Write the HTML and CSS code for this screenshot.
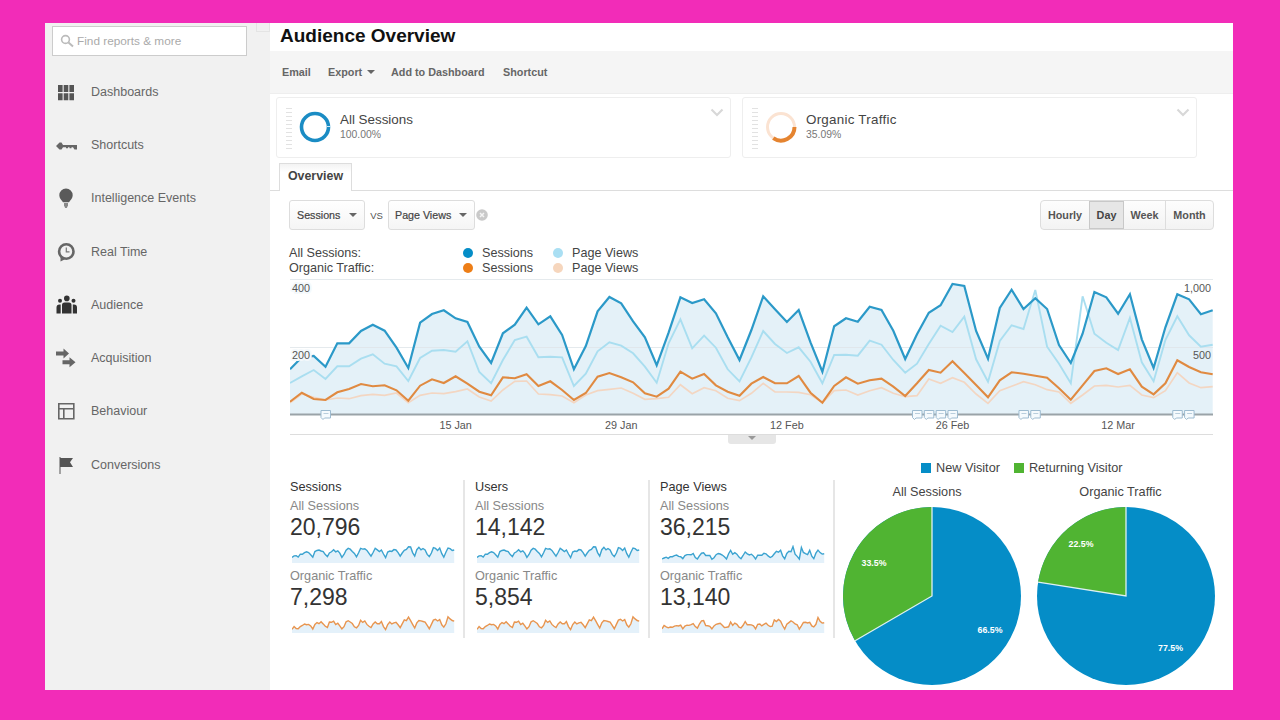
FILE: index.html
```
<!DOCTYPE html>
<html lang="en">
<head>
    <meta charset="UTF-8">
    <meta name="viewport" content="width=device-width, initial-scale=1.0">
    <title>Audience Overview</title>
    <link rel="stylesheet" href="styles.css">
</head>
<body>
    <div class="frame">
        <aside class="sidebar">
            <div class="search">
                <svg width="14" height="14" viewBox="0 0 14 14" fill="none" stroke="#bbb" stroke-width="1.6"><circle cx="5.5" cy="5.5" r="3.9"/><path d="M8.5 8.5L13 12.5" stroke-width="2"/></svg>
                <span>Find reports &amp; more</span>
            </div>
            <div class="collapse"></div>
            <ul class="nav">
                <li>
                    <svg width="22" height="22" viewBox="0 0 22 22"><path fill="#555" d="M3 4h4.600v7H3zM8.700 4h4.600v7H8.700zM14.400 4H19v7h-4.600zM3 12.200h4.600v7H3zM8.700 12.200h4.600v7H8.700zM14.400 12.200H19v7h-4.600z"/></svg>
                    <span>Dashboards</span>
                </li>
                <li>
                    <svg width="22" height="22" viewBox="0 0 22 22"><path fill="#666" d="M1 12l3.500-3.500h2L8 11h14v4.500h-2.500L18 13.300h-1.500v1h-2v-1h-1.500v1h-2v-1H8l-1.500 2.200h-2z"/></svg>
                    <span>Shortcuts</span>
                </li>
                <li>
                    <svg width="22" height="22" viewBox="0 0 22 22"><path fill="#5a5a5a" d="M11 1.500a6.700 6.700 0 0 1 6.700 6.700c0 3-2 4.500-3.700 7H8C6.300 12.700 4.300 11.200 4.300 8.200A6.700 6.700 0 0 1 11 1.500z"/><path fill="#888" d="M9 16h4v2.500l-1.200 2.500h-1.600L9 18.500z"/></svg>
                    <span>Intelligence Events</span>
                </li>
                <li>
                    <svg width="22" height="22" viewBox="0 0 22 22"><circle cx="11.300" cy="10.500" r="7.200" fill="none" stroke="#666" stroke-width="2.600"/><path d="M5.500 15v5.500l5-2.500z" fill="#666"/><path d="M11.300 6.500v4.300h3.200" fill="none" stroke="#777" stroke-width="1.200"/></svg>
                    <span>Real Time</span>
                </li>
                <li class="active">
                    <svg width="22" height="22" viewBox="0 0 22 22" fill="#333"><circle cx="11.800" cy="4.400" r="2.800"/><circle cx="5" cy="6.800" r="2"/><circle cx="18.500" cy="6.800" r="2"/><path d="M7 19.500V11q0-2.500 2.500-2.500H14q2.500 0 2.500 2.500v8.500zM1.500 19.500v-6q0-3 3-3H5.700v9zM22 19.500v-6q0-3-3-3h-1.200v9z"/></svg>
                    <span>Audience</span>
                </li>
                <li>
                    <svg width="22" height="22" viewBox="0 0 22 22" fill="#666"><path d="M1 4.500h7.500V1.500L14 6.500 8.500 11.500V8.500H1zM7.500 13.300h7v-3l6 5-6 5v-3h-7z"/></svg>
                    <span>Acquisition</span>
                </li>
                <li>
                    <svg width="22" height="22" viewBox="0 0 22 22" fill="none" stroke="#666" stroke-width="1.600"><path d="M3.800 3.800h15v15h-15zM3.800 8.800h15M8.800 8.800v10"/></svg>
                    <span>Behaviour</span>
                </li>
                <li>
                    <svg width="22" height="22" viewBox="0 0 22 22" fill="#555"><path d="M4.500 3h1v17h-1zM5.500 4h12.500l-3 4.300 3 4.700H5.500z"/></svg>
                    <span>Conversions</span>
                </li>
            </ul>
        </aside>

        <main class="main">
            <h1>Audience Overview</h1>
            <div class="toolbar">
                <span class="tool-email">Email</span>
                <span class="tool-export">Export <i class="caret"></i></span>
                <span class="tool-add">Add to Dashboard</span>
                <span class="tool-shortcut">Shortcut</span>
            </div>

            <div class="segments">
                <div class="segment">
                    <div class="grip"></div>
                    <svg class="ring" width="32" height="32" viewBox="0 0 32 32" fill="none"><circle cx="16" cy="16" r="13.500" stroke="#1a8cc4" stroke-width="3.600"/><path d="M28 15.500h4" stroke="#cde8f5"/></svg>
                    <div class="segment-text">
                        <div class="segment-name">All Sessions</div>
                        <div class="segment-pct">100.00%</div>
                    </div>
                    <svg class="chevron" width="14" height="9" viewBox="0 0 14 9" fill="none" stroke="#d8d8d8" stroke-width="2.200"><path d="M1.500 1.500L7 7l5.500-5.500"/></svg>
                </div>
                <div class="segment">
                    <div class="grip"></div>
                    <svg class="ring" width="32" height="32" viewBox="0 0 32 32" fill="none"><circle cx="16" cy="16" r="13.500" stroke="#fbe3d2" stroke-width="3"/><path d="M29.500 16A13.500 13.500 0 0 1 8.300 27.100" stroke="#e58430" stroke-width="4"/></svg>
                    <div class="segment-text">
                        <div class="segment-name wide">Organic Traffic</div>
                        <div class="segment-pct">35.09%</div>
                    </div>
                    <svg class="chevron" width="14" height="9" viewBox="0 0 14 9" fill="none" stroke="#d8d8d8" stroke-width="2.200"><path d="M1.500 1.500L7 7l5.500-5.500"/></svg>
                </div>
            </div>

            <div class="tabs"><div class="tab">Overview</div></div>

            <div class="controls">
                <div class="select">Sessions <i class="caret"></i></div>
                <span class="vs">VS</span>
                <div class="select select-wide">Page Views <i class="caret"></i></div>
                <svg class="clear" width="12" height="12" viewBox="0 0 12 12"><circle cx="6" cy="6" r="5.800" fill="#c9c9c9"/><path d="M4 4l4 4M8 4l-4 4" stroke="#f4f4f4" stroke-width="1.500"/></svg>
                <div class="range">
                    <span>Hourly</span><span class="on">Day</span><span>Week</span><span>Month</span>
                </div>
            </div>

            <div class="legend">
                <span>All Sessions:</span><i class="dot blue"></i><span>Sessions</span><i class="dot light-blue"></i><span>Page Views</span>
                <span>Organic Traffic:</span><i class="dot orange"></i><span>Sessions</span><i class="dot light-orange"></i><span>Page Views</span>
            </div>

            <svg id="chart" class="chart" width="924" height="155" viewBox="0 0 924 155"></svg>
            <div class="drawer"><div class="handle"><i class="caret"></i></div></div>

            <div class="bottom">
                <div class="stats">
                    <div class="stat">
                        <h2>Sessions</h2>
                        <p>All Sessions</p>
                        <strong>20,796</strong>
                        <svg class="spark" data-series="sessions" width="165" height="20"></svg>
                        <p>Organic Traffic</p>
                        <strong>7,298</strong>
                        <svg class="spark" data-series="organicSessions" width="165" height="20"></svg>
                    </div>
                    <div class="stat">
                        <h2>Users</h2>
                        <p>All Sessions</p>
                        <strong>14,142</strong>
                        <svg class="spark" data-series="sessions" width="165" height="20"></svg>
                        <p>Organic Traffic</p>
                        <strong>5,854</strong>
                        <svg class="spark" data-series="organicSessions" width="165" height="20"></svg>
                    </div>
                    <div class="stat">
                        <h2>Page Views</h2>
                        <p>All Sessions</p>
                        <strong>36,215</strong>
                        <svg class="spark" data-series="views" width="165" height="20"></svg>
                        <p>Organic Traffic</p>
                        <strong>13,140</strong>
                        <svg class="spark" data-series="organicViews" width="165" height="20"></svg>
                    </div>
                </div>

                <div class="visitors">
                    <div class="visitors-legend">
                        <i class="square new"></i><span>New Visitor</span><i class="square returning"></i><span>Returning Visitor</span>
                    </div>
                    <div class="pies">
                        <div class="pie">
                            <h3>All Sessions</h3>
                            <svg width="180" height="180" viewBox="-90 -90 180 180">
                                <circle r="89" fill="#058dc7"/>
                                <path d="M0 0L-76.900 44.800A89 89 0 0 1 0-89z" fill="#50b432"/>
                                <path d="M0-89V0L-76.900 44.800" fill="none" stroke="#dff0f2" stroke-width="1.300"/>
                                <text x="-58" y="-30">33.5%</text>
                                <text x="58" y="37">66.5%</text>
                            </svg>
                        </div>
                        <div class="pie">
                            <h3>Organic Traffic</h3>
                            <svg width="180" height="180" viewBox="-90 -90 180 180">
                                <circle r="89" fill="#058dc7"/>
                                <path d="M0 0L-87.900-13.900A89 89 0 0 1 0-89z" fill="#50b432"/>
                                <path d="M0-89V0L-87.900-13.900" fill="none" stroke="#dff0f2" stroke-width="1.300"/>
                                <text x="-45" y="-49">22.5%</text>
                                <text x="44.500" y="55">77.5%</text>
                            </svg>
                        </div>
                    </div>
                </div>
            </div>
        </main>
    </div>
    <script src="script.js"></script>
</body>
</html>
```
FILE: styles.css
```
* { box-sizing: border-box; }
body { margin: 0; height: 720px; padding: 23px 47px 30px 45px; background: #f22cb8; font-family: "Liberation Sans", Arial, sans-serif; color: #444; overflow: hidden; }
h1, h2, h3, p, ul { margin: 0; padding: 0; font-weight: normal; }
svg { display: block; flex: none; }

.frame { display: flex; width: 1188px; height: 667px; background: #fff; }

/* sidebar */
.sidebar { position: relative; width: 225px; background: #f1f1f1; }
.search { display: flex; align-items: center; gap: 3px; width: 195px; height: 30px; margin: 3px 0 0 7px; padding-left: 7px; background: #fff; border: 1px solid #ccc; font-size: 11.8px; color: #aaa; }
.collapse { position: absolute; right: 0; top: 0; width: 14px; height: 9px; border: 1px solid #e4e4e4; border-top: none; }
.nav { list-style: none; margin-top: 9px; }
.nav li { display: flex; align-items: center; gap: 14px; height: 53.3px; padding-left: 10px; font-size: 12.5px; color: #666; }

/* header */
.main { width: 963px; }
h1 { height: 28px; padding-left: 10px; font-size: 19px; font-weight: bold; line-height: 26px; color: #111; }
.toolbar { display: flex; align-items: center; height: 43px; padding-left: 12px; background: #f5f5f5; border-bottom: 1px solid #eee; font-size: 10.8px; font-weight: bold; color: #666; }
.tool-email { width: 46px; }
.tool-export { width: 63px; }
.tool-add { width: 112px; }
.caret { display: inline-block; border: 4px solid transparent; border-top-color: #666; border-bottom: none; vertical-align: 2px; }
.tool-export .caret { margin-left: 2px; }

/* segments */
.segments { display: flex; gap: 11px; padding: 3px 0 0 6px; }
.segment { display: flex; width: 455px; height: 61px; padding-left: 9px; border: 1px solid #eee; border-radius: 3px; }
.grip { width: 6px; height: 42px; margin-top: 10px; background: repeating-linear-gradient(#e2e2e2 0 1px, #fff 1px 4px); }
.ring { margin: 13px 9px 0 7px; }
.segment-text { flex: 1; padding-top: 14px; }
.segment-name { font-size: 13.4px; line-height: 16px; color: #444; }
.segment-name.wide { letter-spacing: 0.25px; }
.segment-pct { font-size: 10.4px; line-height: 13px; color: #777; }
.chevron { margin: 10px 6px 0 0; }

.tabs { height: 33px; padding: 5px 0 0 9px; border-bottom: 1px solid #ddd; }
.tab { width: 73px; height: 28px; background: linear-gradient(#f3f3f3, #fff 8px); border: 1px solid #ddd; border-bottom: none; font-size: 12.4px; font-weight: bold; line-height: 25px; text-align: center; color: #444; }

.controls { display: flex; align-items: center; height: 30px; margin-top: 9px; padding: 0 19px; }
.select { display: flex; align-items: center; justify-content: space-between; width: 76px; height: 30px; padding: 0 7px; background: linear-gradient(#fff, #f5f5f5); border: 1px solid #ddd; border-radius: 3px; font-size: 10.7px; color: #444; -webkit-text-stroke: 0.2px; }
.select-wide { width: 87px; padding-left: 6px; }
.vs { width: 23px; text-align: center; font-size: 9.5px; color: #555; }
.clear { margin-left: 1px; }
.range { display: flex; height: 30px; margin-left: auto; border: 1px solid #ddd; border-radius: 4px; background: linear-gradient(#fdfdfd, #f3f3f3); font-size: 10.8px; font-weight: bold; line-height: 28px; text-align: center; color: #555; }
.range span { width: 41px; }
.range span:first-child { width: 48px; }
.range span:last-child { width: 48px; border-left: 1px solid #ddd; }
.range .on { width: 35px; background: #e6e6e6; border: 1px solid #c8c8c8; line-height: 26px; color: #444; }

/* chart */
.legend { display: grid; grid-template-columns: 174px 19px 71px 19px 1fr; grid-auto-rows: 14.6px; align-items: center; margin: 16px 0 0 19px; font-size: 12.6px; color: #444; }
.dot { width: 10px; height: 10px; border-radius: 50%; }
.blue { background: #058dc7; }
.light-blue { background: #aadff3; }
.orange { background: #ed7e17; }
.light-orange { background: #f6d6bd; }
.chart { margin: 4px 0 0 20px; }
.chart text { font-size: 10.8px; fill: #555; }
.chart .halo { stroke: #f4f9fc; stroke-width: 4px; stroke-linejoin: round; paint-order: stroke; }
.drawer { width: 923px; height: 10px; margin-left: 20px; border-top: 1px solid #ddd; }
.handle { width: 48px; height: 9px; margin: 0 auto; background: #e6e6e6; border-radius: 0 0 3px 3px; line-height: 5px; text-align: center; }
.handle .caret { margin-top: 1px; border-top-color: #999; vertical-align: top; }

/* scorecards and pies */
.bottom { display: flex; padding: 16px 0 0 20px; }
.stats { display: flex; gap: 10px; height: 158px; margin-top: 20px; }
.stat { width: 175px; border-right: 2px solid #e6e6e6; }
h2, .stat p { font-size: 12.7px; line-height: 15px; color: #333; }
.stat p { margin-top: 4px; color: #888; }
.stat strong { display: block; font-size: 23px; font-weight: normal; line-height: 26px; color: #333; }
.stat .spark { margin: 5px 0 0 2px; }
.stat .spark + p { margin-top: 4px; }
.visitors { width: 388px; padding-left: 7px; }
.visitors-legend { display: flex; align-items: center; height: 15px; padding-left: 79px; font-size: 12.7px; color: #444; }
.square { width: 10px; height: 10px; margin-right: 5px; }
.new { background: #058dc7; }
.returning { margin-left: 14px; background: #50b432; }
.pies { display: flex; gap: 13.5px; padding-top: 10px; }
.pie { width: 180px; }
h3 { width: 170px; height: 15px; margin-bottom: 6px; font-size: 12.7px; line-height: 15px; text-align: center; color: #444; }
.pie text { font-size: 8.8px; font-weight: bold; fill: #fff; text-anchor: middle; }
```
FILE: script.js
```
const data = {
    sessions: [134,170,174,142,212,212,249,268,250,199,138,274,300,311,287,276,202,153,242,268,319,269,293,237,134,204,308,351,332,278,230,146,244,350,333,344,302,230,162,252,353,314,276,312,215,127,263,287,277,322,312,250,165,239,304,326,390,384,249,166,318,373,315,347,315,207,153,241,366,350,301,359,224,138,260,359,344,299,311],
    views: [93,113,132,105,143,143,166,179,151,143,99,168,190,192,187,218,126,92,162,222,232,170,172,170,84,121,188,215,205,182,142,94,212,284,197,235,199,134,98,170,249,210,183,200,157,92,177,178,175,220,208,162,124,151,210,265,246,292,164,97,219,266,255,372,202,151,92,353,241,214,192,288,155,98,222,293,236,202,208],
    organicSessions: [37,64,45,42,65,75,90,83,86,71,40,85,104,93,113,91,67,56,110,107,119,84,98,72,42,63,112,123,110,95,62,52,76,127,106,120,86,67,55,91,111,92,92,114,64,34,84,110,91,101,106,82,54,92,132,124,158,123,87,50,101,125,121,115,109,77,43,86,129,137,120,134,82,59,92,161,141,125,119],
    organicViews: [34,60,50,42,48,46,55,59,56,63,34,56,63,61,67,75,51,39,72,98,99,60,58,54,34,57,70,74,78,62,44,46,50,88,61,79,70,47,40,62,92,66,66,65,58,34,70,72,57,70,79,62,52,55,105,92,109,95,60,32,70,83,97,88,73,66,32,57,84,86,81,86,57,49,70,124,93,79,82]
};

function points(values, step, base, scale) {
    return values.map((v, i) => (i * step).toFixed(1) + ',' + (base - v * scale).toFixed(1)).join(' ');
}

const STEP = 11.83;
const line = (name, color, width) =>
    `<polyline points="${points(data[name], STEP, 135, 1 / 3)}" fill="none" stroke="${color}" stroke-width="${width}"/>`;

let svg = `<polygon points="0,135 ${points(data.sessions, STEP, 135, 1 / 3)} 922.7,135" fill="#e4f1f8"/>`;
svg += '<path d="M0 .5H923M0 68.500H923" stroke="#dfe5e8" stroke-opacity=".8"/>';
svg += line('organicViews', '#f3d6c2', 1.7);
svg += line('views', '#a9def0', 1.9);
svg += line('organicSessions', '#e08a41', 2.1);
svg += line('sessions', '#2b99c8', 2.2);
svg += '<path d="M0 135.500H923" stroke="#9aa3a8" stroke-width="2"/>';
svg += '<text class="halo" x="2" y="13">400</text><text class="halo" x="2" y="80">200</text>';
svg += '<text x="921" y="13" text-anchor="end">1,000</text><text x="921" y="80" text-anchor="end">500</text>';

['15 Jan', '29 Jan', '12 Feb', '26 Feb', '12 Mar'].forEach((label, i) => {
    svg += `<text x="${(i + 1) * 14 * STEP}" y="150" text-anchor="middle">${label}</text>`;
});

// annotation markers on the axis
[3, 53, 54, 55, 56, 62, 63, 75, 76].forEach(day => {
    const x = day * STEP;
    svg += `<path d="M${x - 4.5} 131.500h9.500v7.500h-6l-1.500 1.500-2-2z" fill="#f5fafd" stroke="#9dbbd0"/><path d="M${x - 2} 134.500h5" stroke="#b9cedd"/>`;
});
document.getElementById('chart').innerHTML = svg;

const sparkScale = { sessions: 0.0417, views: 0.044, organicSessions: 0.1, organicViews: 0.125 };
document.querySelectorAll('.spark').forEach(el => {
    const name = el.dataset.series;
    const color = name.startsWith('organic') ? '#e8954f' : '#3ba3d0';
    const pts = points(data[name], 2.08, 18, sparkScale[name]);
    el.innerHTML = `<polygon points="0,18 ${pts} 162.200,18" fill="#e4f1fa"/><polyline points="${pts}" fill="none" stroke="${color}" stroke-width="1.400"/>`;
});
```
